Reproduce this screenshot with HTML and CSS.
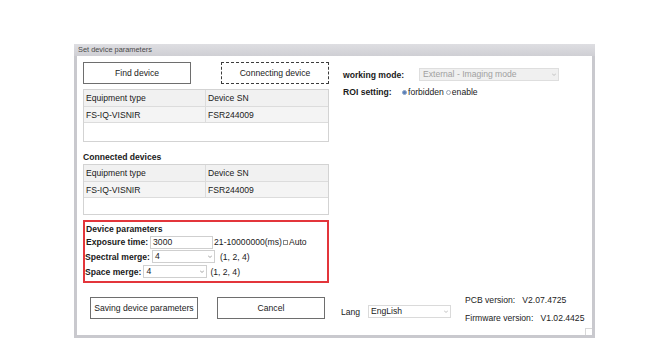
FILE: index.html
```html
<!DOCTYPE html>
<html>
<head>
<meta charset="utf-8">
<link rel="stylesheet" href="styles.css">
</head>
<body>
<div class="window">
  <div class="titlebar">Set device parameters</div>
  <div class="body">
    <div class="top">
      <div class="left">
        <div class="btnrow">
          <div class="btn">Find device</div>
          <div class="btn focus">Connecting device</div>
        </div>
        <div class="table t1">
          <div class="tr head"><div class="c1">Equipment type</div><div class="c2">Device SN</div></div>
          <div class="tr data"><div class="c1">FS-IQ-VISNIR</div><div class="c2">FSR244009</div></div>
        </div>
        <div class="section">Connected devices</div>
        <div class="table t2">
          <div class="tr head"><div class="c1">Equipment type</div><div class="c2">Device SN</div></div>
          <div class="tr data"><div class="c1">FS-IQ-VISNIR</div><div class="c2">FSR244009</div></div>
        </div>
        <div class="params">
          <div class="ptitle">Device parameters</div>
          <div class="prow exp">
            <span class="lbl">Exposure time:</span>
            <span class="input">3000</span>
            <span class="hint">21-10000000(ms)</span><span class="check"></span><span class="auto">Auto</span>
          </div>
          <div class="prow spec">
            <span class="lbl">Spectral merge:</span>
            <span class="select s1"><span>4</span><svg class="arrow" width="4" height="3" viewBox="0 0 4 3"><path d="M0 0.5 L2 2.5 L4 0.5" fill="none" stroke="#8a8a8a" stroke-width="0.8"/></svg></span>
            <span class="hint">(1, 2, 4)</span>
          </div>
          <div class="prow space">
            <span class="lbl">Space merge:</span>
            <span class="select s2"><span>4</span><svg class="arrow" width="4" height="3" viewBox="0 0 4 3"><path d="M0 0.5 L2 2.5 L4 0.5" fill="none" stroke="#8a8a8a" stroke-width="0.8"/></svg></span>
            <span class="hint">(1, 2, 4)</span>
          </div>
        </div>
      </div>
      <div class="right">
        <div class="rrow mode">
          <span class="lbl">working mode:</span>
          <span class="select disabled"><span>External - Imaging mode</span><svg class="arrow" width="4" height="3" viewBox="0 0 4 3"><path d="M0 0.5 L2 2.5 L4 0.5" fill="none" stroke="#b5b5b5" stroke-width="0.8"/></svg></span>
        </div>
        <div class="rrow roi">
          <span class="lbl">ROI setting:</span>
          <span class="radio on"></span><span class="rtxt">forbidden</span>
          <span class="radio"></span><span class="rtxt">enable</span>
        </div>
      </div>
    </div>
    <div class="bottom">
      <div class="btn save">Saving device parameters</div>
      <div class="btn cancel">Cancel</div>
      <div class="lang">
        <span class="langlbl">Lang</span>
        <span class="select langsel"><span>EngLish</span><svg class="arrow" width="4" height="3" viewBox="0 0 4 3"><path d="M0 0.5 L2 2.5 L4 0.5" fill="none" stroke="#b0b0b0" stroke-width="0.8"/></svg></span>
      </div>
      <div class="versions">
        <div>PCB version:&nbsp;&nbsp; V2.07.4725</div>
        <div>Firmware version:&nbsp;&nbsp; V1.02.4425</div>
      </div>
    </div>
    <div class="grip"></div>
  </div>
</div>
</body>
</html>
```

FILE: styles.css
```css
* { box-sizing: border-box; }
html, body { margin: 0; padding: 0; background: #ffffff; }
body {
  font-family: "Liberation Sans", Arial, sans-serif;
  font-size: 8.6px;
  color: #1a1a1a;
}
.window {
  margin: 44px 0 0 74px;
  width: 521px;
  height: 294px;
  border: 3px solid #c9c9ce;
  border-top: none;
  background: #fff;
  display: flex;
  flex-direction: column;
}
.titlebar {
  height: 12px;
  margin: 0 -3px;
  padding-left: 4px;
  background: linear-gradient(#dedee2, #cfcfd4);
  color: #4a4a4a;
  font-size: 7.4px;
  line-height: 12px;
}
.body {
  position: relative;
  flex: 1;
  padding: 6px 0 0 6px;
}
.top {
  display: grid;
  grid-template-columns: 246px 1fr;
  column-gap: 12px;
}
.left { display: flex; flex-direction: column; }
.btnrow { display: flex; justify-content: space-between; }
.btn {
  width: 108px;
  height: 22px;
  border: 1px solid #6e6e6e;
  background: #fff;
  display: flex;
  align-items: center;
  justify-content: center;
  font-size: 8.6px;
}
.btn.focus { border: 1px dashed #3c3c3c; }
.table {
  margin-top: 5px;
  border: 1px solid #d3d3d3;
  background: #fff;
}
.t1 { height: 53px; }
.t2 { height: 51px; margin-top: 0; }
.tr {
  display: grid;
  grid-template-columns: 122px 1fr;
  height: 17px;
  border-bottom: 1px solid #dcdcdc;
  background: #f1f1f1;
}
.tr.data { height: 16px; background: #f4f4f4; }
.tr > div { padding-left: 2px; line-height: 16px; }
.tr > .c1 { border-right: 1px solid #dcdcdc; }
.section {
  height: 22px;
  padding-top: 8px;
  font-weight: bold;
  line-height: 14px;
}
.params {
  margin-top: 5px;
  height: 63px;
  border: 2px solid #e3353b;
  padding: 1px 0 0 0;
}
.ptitle { font-weight: bold; line-height: 12px; padding-left: 1px; }
.prow { display: flex; align-items: center; height: 15px; }
.prow.exp { height: 14px; padding-left: 1px; }
.lbl { font-weight: bold; white-space: nowrap; }
.input {
  width: 63px;
  height: 13px;
  border: 1px solid #cfcfcf;
  padding-left: 2px;
  line-height: 11px;
  margin-left: 2px;
}
.hint { margin-left: 1px; white-space: nowrap; }
.spec .hint { margin-left: 5px; }
.space .hint { margin-left: 3px; }
.check {
  display: inline-block;
  width: 5px;
  height: 5px;
  border: 1px solid #8a8a8a;
  margin: 0 1px 0 1px;
}
.auto { white-space: nowrap; }
.select {
  display: inline-flex;
  justify-content: space-between;
  align-items: center;
  height: 13px;
  border: 1px solid #cfcfcf;
  background: #fff;
  padding: 0 2px 0 2px;
  line-height: 11px;
}
.arrow { display: block; flex: none; }
.s1 { width: 63px; margin-left: 2px; }
.s2 { width: 64px; margin-left: 2px; }
.right { padding-top: 6px; padding-left: 2px; }
.rrow { display: flex; align-items: center; }
.mode { height: 13px; }
.mode .lbl { width: 76px; }
.select.disabled {
  width: 140px;
  background: #f0f0f0;
  border-color: #dedede;
  color: #a0a0a0;
  padding-left: 3px;
}
.roi { margin-top: 5px; height: 12px; }
.roi .lbl { width: 59px; }
.radio {
  display: inline-block;
  width: 5px;
  height: 5px;
  border-radius: 50%;
  border: 1px solid #9aa6b8;
  margin-right: 1px;
}
.radio.on { background: #5a7fb8; border-color: #8ea6c8; }
.rtxt { margin-right: 2px; }
.bottom {
  display: flex;
  margin-top: 14px;
  padding-left: 7px;
  height: 23px;
}
.btn.save { width: 108px; }
.btn.cancel { width: 108px; margin-left: 19px; }
.lang { display: flex; align-items: center; margin-left: 16px; margin-top: 8px; height: 13px; }
.langlbl { width: 27px; }
.langsel { width: 83px; padding-left: 2px; border-color: #dadada; }
.versions {
  margin-left: 14px;
  margin-top: -6px;
  line-height: 18px;
  white-space: nowrap;
  color: #222;
}
.grip {
  position: absolute;
  right: 0;
  bottom: 0;
  width: 7px;
  height: 7px;
  border-left: 1px solid #d8d8d8;
  border-top: 1px solid #d8d8d8;
}
```
